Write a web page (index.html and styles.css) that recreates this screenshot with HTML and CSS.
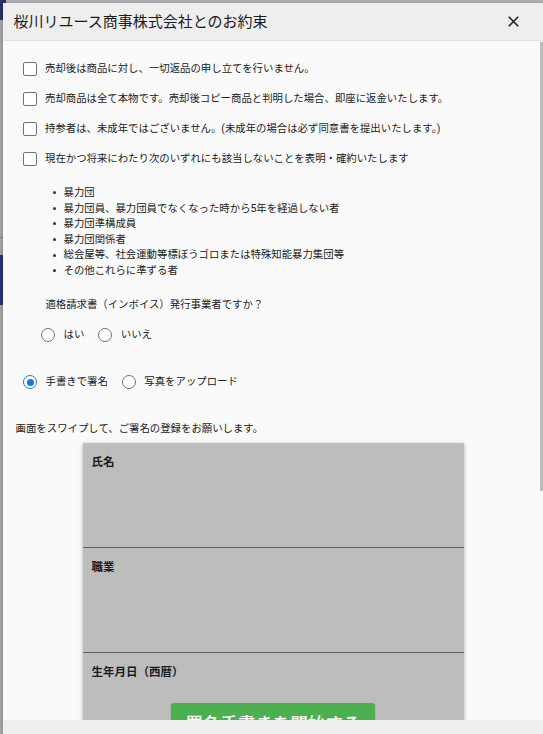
FILE: index.html
```html
<!DOCTYPE html>
<html lang="ja">
<head>
<meta charset="utf-8">
<title>桜川リユース商事株式会社とのお約束</title>
<link rel="stylesheet" href="styles.css">
</head>
<body>
<div class="backdrop">
  <div class="bg-top"><span class="bg-corner"></span></div>
  <div class="bg-line"></div>
  <div class="bg-band"></div>
</div>
<div class="modal">
  <header class="modal-header">
    <h1 class="modal-title">桜川リユース商事株式会社とのお約束</h1>
    <button class="close" aria-label="閉じる">
      <svg width="11" height="11" viewBox="0 0 11 11"><path d="M0.8 0.8 L10.2 10.2 M10.2 0.8 L0.8 10.2" stroke="#212121" stroke-width="1.6" fill="none"/></svg>
    </button>
  </header>
  <div class="modal-body">
    <div class="checks">
      <label class="check-row"><span class="box"></span><span>売却後は商品に対し、一切返品の申し立てを行いません。</span></label>
      <label class="check-row"><span class="box"></span><span>売却商品は全て本物です。売却後コピー商品と判明した場合、即座に返金いたします。</span></label>
      <label class="check-row"><span class="box"></span><span>持参者は、未成年ではございません。(未成年の場合は必ず同意書を提出いたします。)</span></label>
      <label class="check-row"><span class="box"></span><span>現在かつ将来にわたり次のいずれにも該当しないことを表明・確約いたします</span></label>
    </div>
    <ul class="list">
      <li>暴力団</li>
      <li>暴力団員、暴力団員でなくなった時から5年を経過しない者</li>
      <li>暴力団準構成員</li>
      <li>暴力団関係者</li>
      <li>総会屋等、社会運動等標ぼうゴロまたは特殊知能暴力集団等</li>
      <li>その他これらに準ずる者</li>
    </ul>
    <p class="question">適格請求書（インボイス）発行事業者ですか？</p>
    <div class="radios radios-invoice">
      <label class="radio"><span class="circle"></span><span>はい</span></label>
      <label class="radio"><span class="circle"></span><span>いいえ</span></label>
    </div>
    <div class="radios radios-sign">
      <label class="radio"><span class="circle checked"></span><span>手書きで署名</span></label>
      <label class="radio"><span class="circle"></span><span>写真をアップロード</span></label>
    </div>
    <p class="instruction">画面をスワイプして、ご署名の登録をお願いします。</p>
    <div class="sign-box">
      <div class="sign-section"><div class="sign-label">氏名</div></div>
      <div class="sign-section"><div class="sign-label">職業</div></div>
      <div class="sign-section last">
        <div class="sign-label">生年月日（西暦）</div>
        <button class="start-btn">署名手書きを開始する</button>
      </div>
    </div>
    <div class="scroll-thumb"></div>
  </div>
  <footer class="modal-footer"></footer>
</div>
</body>
</html>
```

FILE: styles.css
```css
* { box-sizing: border-box; }

html, body {
  margin: 0;
  padding: 0;
  width: 543px;
  height: 734px;
  overflow: hidden;
}

body {
  font-family: Roboto, "Noto Sans CJK JP", sans-serif;
  color: #212121;
  background: #a4a4a4;
  position: relative;
}

.backdrop {
  position: absolute;
  inset: 0;
  background: #a6a6a6;
}

.bg-top {
  height: 20px;
  background: #b4b4b8;
}

.bg-corner {
  display: block;
  width: 6px;
  height: 20px;
  background: #26306e;
}

.bg-line {
  margin-top: 217px;
  height: 1px;
  background: #7a7a7a;
}

.bg-band {
  margin-top: 17px;
  height: 50px;
  background: #27337a;
}

.modal {
  position: absolute;
  left: 3px;
  top: 3px;
  right: 0;
  bottom: 0;
  display: flex;
  flex-direction: column;
  background: #fafafa;
  box-shadow: 0 0 4px rgba(0, 0, 0, 0.25);
}

.modal-header {
  height: 38px;
  flex: none;
  display: flex;
  align-items: center;
  justify-content: space-between;
  background: #eeeeee;
  border-bottom: 1px solid #e2e2e2;
  padding-left: 10.5px;
}

.modal-title {
  margin: 0;
  font-size: 15px;
  font-weight: 400;
  line-height: 20px;
  color: #1a1a1a;
}

.close {
  width: 24px;
  height: 24px;
  margin-right: 18px;
  border: 0;
  background: transparent;
  padding: 0;
  display: flex;
  align-items: center;
  justify-content: center;
}

.modal-body {
  flex: 1;
  position: relative;
  overflow: hidden;
  font-size: 10.4px;
}

.checks {
  padding-top: 13px;
  padding-left: 20px;
}

.check-row {
  height: 30px;
  display: flex;
  align-items: center;
  gap: 8px;
  line-height: 16px;
}

.box {
  width: 14px;
  height: 14px;
  flex: none;
  border: 1.5px solid #727272;
  border-radius: 2px;
  background: #fff;
}

.list {
  list-style: none;
  margin: 11px 0 0;
  padding: 0 0 0 49.5px;
}

.list li {
  display: flex;
  align-items: center;
  line-height: 15.6px;
  height: 15.6px;
}

.list li::before {
  content: "";
  width: 3px;
  height: 3px;
  border-radius: 50%;
  background: #333;
  margin-right: 8px;
  flex: none;
}

.question {
  margin: 18.5px 0 0 42.4px;
  line-height: 16px;
}

.radios {
  height: 30px;
  display: flex;
  align-items: center;
  gap: 14px;
}

.radios-invoice {
  margin-top: 7px;
  padding-left: 38px;
}

.radios-sign {
  margin-top: 17px;
  padding-left: 20px;
}

.radio {
  display: flex;
  align-items: center;
  gap: 8.5px;
  line-height: 16px;
}

.circle {
  width: 14px;
  height: 14px;
  flex: none;
  border: 1.5px solid #727272;
  border-radius: 50%;
  background: #fff;
  display: flex;
  align-items: center;
  justify-content: center;
}

.circle.checked {
  border-color: #1e78d2;
}

.circle.checked::after {
  content: "";
  width: 7px;
  height: 7px;
  border-radius: 50%;
  background: #1e78d2;
}

.instruction {
  margin: 24px 0 0 12.6px;
  line-height: 16px;
}

.sign-box {
  width: 381px;
  margin: 6px auto 0;
  background: #bdbdbd;
  box-shadow: 0 1px 4px rgba(0, 0, 0, 0.3);
}

.sign-section {
  height: 105px;
  padding: 10.5px 9px 0;
  border-bottom: 1px solid #5f5f5f;
}

.sign-section.last {
  border-bottom: 0;
  height: 140px;
  display: flex;
  flex-direction: column;
  align-items: center;
}

.sign-label {
  align-self: stretch;
  font-size: 11.5px;
  font-weight: 700;
  line-height: 16px;
  color: #1a1a1a;
}

.start-btn {
  margin-top: 23.5px;
  width: 204px;
  height: 42px;
  border: 0;
  border-radius: 3px;
  background: #4caf50;
  color: #ffffff;
  font-family: Roboto, "Noto Sans CJK JP", sans-serif;
  font-size: 17.5px;
  font-weight: 500;
  line-height: 22px;
  padding: 0;
  box-shadow: 0 1px 2px rgba(0, 0, 0, 0.2);
}

.scroll-thumb {
  position: absolute;
  right: 0;
  top: 1px;
  width: 3px;
  height: 449px;
  background: #bcbcbc;
}

.modal-footer {
  height: 14px;
  flex: none;
  background: #eeeeee;
}
```
